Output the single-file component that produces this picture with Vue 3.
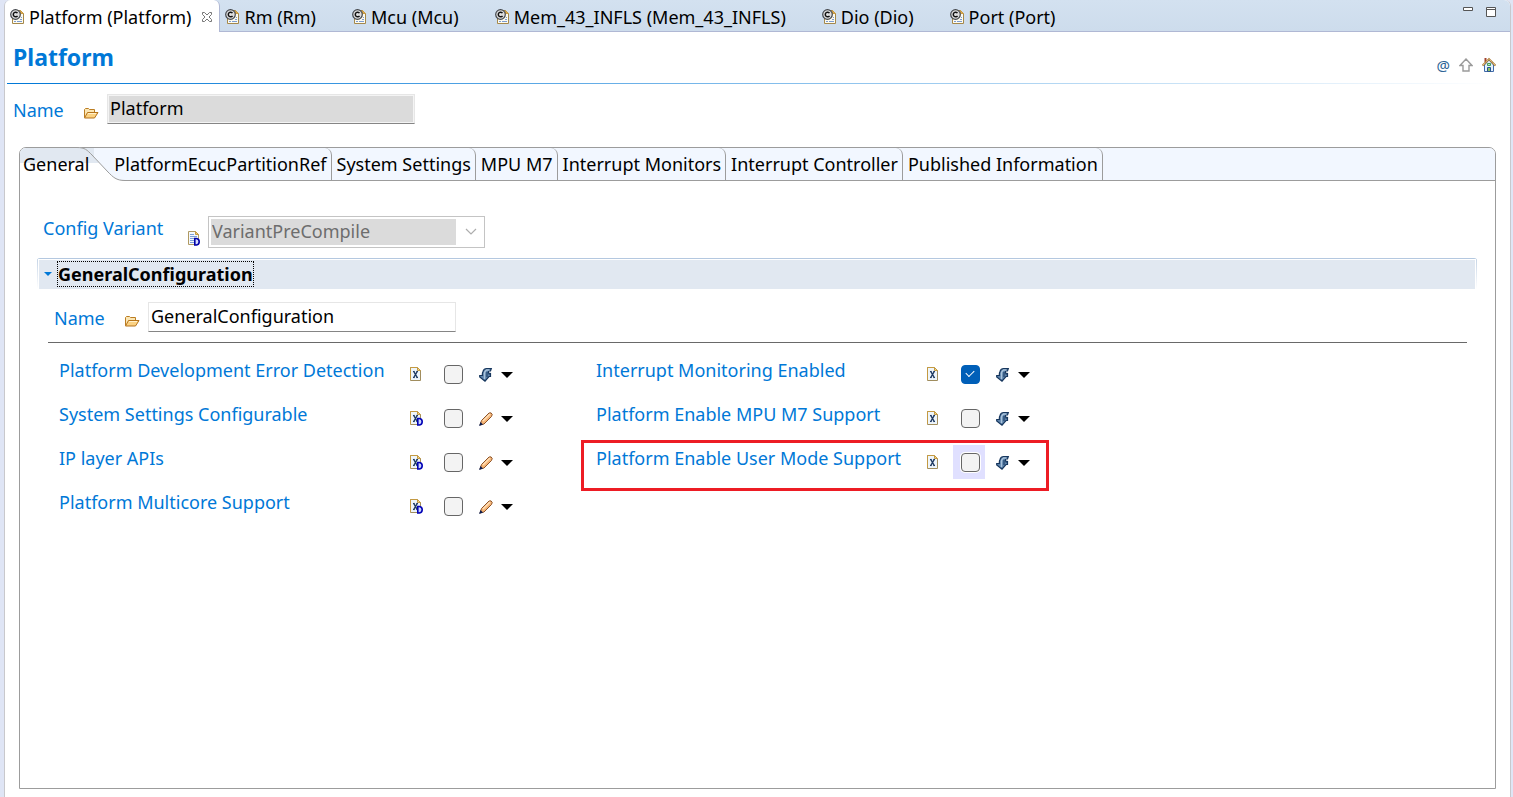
<template>
  <div class="editor">
    <svg class="defs" width="0" height="0" aria-hidden="true">
      <symbol id="i-module" viewBox="0 0 14 15">
        <path d="M4.500 1.500H10.500L13.500 4.500V14.500H2.500V8" fill="#fdfbf0" stroke="#a5884a" />
        <path d="M10.500 1.500L13.500 4.500H10.500Z" fill="#e8b04a" stroke="#c79a45" />
        <path d="M7 12.500H12M4 12.500H6M10 10.500H12M11 8.500H12" stroke="#7b9bd0" />
        <circle cx="5.500" cy="5.500" r="4.800" fill="#dedede" stroke="#44474c" stroke-width="1.200" />
        <path d="M7.500 4.200A2.300 2.300 0 1 0 7.500 6.800" fill="none" stroke="#111" stroke-width="1.500" />
      </symbol>
      <symbol id="i-folder" viewBox="0 0 16 12">
        <path d="M1.500 10.500V2.500L2.500 1.500H5.500L6.500 2.500H11.500V5" fill="#fbe6b4" stroke="#bb7d22" />
        <path d="M1.500 11L4.500 5.500H15L11.500 11Z" fill="#fbd283" stroke="#b5731a" />
        <path d="M5 6.500H13" stroke="#fff0cc" />
      </symbol>
      <symbol id="i-doc" viewBox="0 0 14 15">
        <path d="M0.500 0.500H7.500L10.500 3.500V13.500H0.500Z" fill="#f4f8fd" stroke="#b09a62" />
        <path d="M7.500 0.500L10.500 3.500H7.500Z" fill="#f0cf7c" stroke="#c49a42" />
        <path d="M2 3.500H6M2 5.500H9M2 7.500H9M2 9.500H6M2 11.500H6" stroke="#7d9fd6" />
        <path d="M6.800 7.500V14H8.500Q11.200 13.500 11.200 10.700Q11.200 8 8.500 7.500Z" fill="#d5dcff" stroke="#0000a8" stroke-width="1.600" />
      </symbol>
      <symbol id="i-x" viewBox="0 0 14 15">
        <path d="M0.500 0.500H7.500L10.500 3.500V13.500H0.500Z" fill="#eef5fb" stroke="#a08d5e" />
        <path d="M0.500 13V0.500H7" fill="none" stroke="#c49a42" />
        <path d="M7.500 0.500L10.500 3.500H7.500Z" fill="#f4d68c" stroke="#c49a42" />
        <path d="M3.500 4L7.500 11M7.500 4L3.500 11" stroke="#1f3a63" stroke-width="1.500" />
        <path d="M3 4.500H4.500M6.500 4.500H8M3 10.500H4.500M6.500 10.500H8" stroke="#1f3a63" />
      </symbol>
      <symbol id="i-xd" viewBox="0 0 14 15">
        <use href="#i-x" width="14" height="15" />
        <path d="M7.800 7.500V14H9.500Q12.200 13.500 12.200 10.700Q12.200 8 9.500 7.500Z" fill="#c9d4ff" stroke="#0000b4" stroke-width="1.600" />
      </symbol>
      <symbol id="i-calc" viewBox="0 0 14 14">
        <path d="M4 3.500Q5 0.700 7.500 0.700H12.300L11.500 3H9.500V5L11.500 5.500V8.500H10L6 13.200L0.700 9V7.500H3.500Q3 5.500 4 3.500Z" fill="#5d83ab" stroke="#17375e" stroke-width="1.200" />
        <path d="M5.500 11V7Q5 3.500 7.500 2H10.500" fill="none" stroke="#aac4dc" stroke-width="1.400" />
        <path d="M8 4V9M9.500 6H11.500" fill="none" stroke="#17375e" />
      </symbol>
      <symbol id="i-pencil" viewBox="0 0 14 14">
        <path d="M1 13L2.500 8.500L10 1Q12.500 0 13.200 2.500L12.500 4.500L5 12Z" fill="#f6b678" stroke="#8d542a" />
        <path d="M4 9L11 2" stroke="#ffe0b8" stroke-width="1.500" />
        <path d="M0 14L1.500 10L4 12.500Z" fill="#0c1d4f" />
      </symbol>
      <symbol id="i-up" viewBox="0 0 14 14">
        <path d="M7 1L13 7.500H10V13H4V7.500H1Z" fill="#fdfdfd" stroke="#9a9a9a" stroke-width="1.400" />
      </symbol>
      <symbol id="i-home" viewBox="0 0 14 16">
        <path d="M2.500 8L7 3L11.500 8V14.500H2.500Z" fill="#e4f1fc" stroke="#3f69a8" />
        <path d="M3.500 1V5" stroke="#a0432f" stroke-width="2" />
        <path d="M0.500 8.500L7 2L13.500 8.500" fill="none" stroke="#ad7c38" stroke-width="1.800" />
        <path d="M1 8L7 2L13 8" fill="none" stroke="#f5dc9c" stroke-width="1" stroke-dasharray="1 1" />
        <path d="M5.500 6.500H8.500V8.500H5.500Z" fill="#bfe6c4" stroke="#3f9b58" />
        <path d="M5.500 10.500H8.500V14.500H5.500Z" fill="#8fc05a" stroke="#285391" />
      </symbol>
    </svg>

    <header class="files">
      <nav class="file-tabs">
        <button v-for="(file, i) in files" :key="file" class="file-tab" :class="{ active: i === activeFile }" @click="activeFile = i">
          <svg width="14" height="15"><use href="#i-module" /></svg>
          <span>{{ file }}</span>
          <svg v-if="i === activeFile" class="close" width="12" height="12" viewBox="0 0 12 12">
            <path d="M1.500 1.500H3.500L6 4L8.500 1.500H10.500V3.500L8 6L10.500 8.500V10.500H8.500L6 8L3.500 10.500H1.500V8.500L4 6L1.500 3.500Z" fill="#fff" stroke="#777" />
          </svg>
        </button>
      </nav>
      <div class="window-buttons">
        <button aria-label="Minimize">
          <svg width="10" height="10" viewBox="0 0 10 10"><path d="M0.500 0.500H9.500V3.500H0.500Z" fill="#fff" stroke="#555" /></svg>
        </button>
        <button aria-label="Maximize">
          <svg width="10" height="10" viewBox="0 0 10 10"><path d="M0.500 0.500H9.500V9.500H0.500ZM0 2.500H10" fill="#fff" stroke="#555" /></svg>
        </button>
      </div>
    </header>

    <main class="content">
      <div class="title">
        <h1>Platform</h1>
        <div class="tools">
          <button class="at" aria-label="Annotate">@</button>
          <button aria-label="Up"><svg width="14" height="14"><use href="#i-up" /></svg></button>
          <button aria-label="Home"><svg width="14" height="16"><use href="#i-home" /></svg></button>
        </div>
      </div>
      <div class="title-line"></div>

      <div class="name-row">
        <label for="module-name">Name</label>
        <svg width="16" height="12"><use href="#i-folder" /></svg>
        <input id="module-name" type="text" value="Platform" disabled />
      </div>

      <section class="folder">
        <div class="pages">
          <button v-for="(page, i) in pages" :key="page" class="page" :class="{ active: i === activePage }" @click="activePage = i">
            <svg v-if="i === activePage" class="curve" width="48" height="34" viewBox="0 0 48 34">
              <path d="M0 0.500C8 0.500 10 3 15 8L31 25C36 30 39 33.500 48 33.500V34H0Z" fill="#fff" />
              <path d="M0 0.500C8 0.500 10 3 15 8L22 16H0Z" fill="#e1e8f1" />
              <path d="M0 0.500C8 0.500 10 3 15 8L31 25C36 30 39 33.500 48 33.500" fill="none" stroke="#9c9c9c" />
            </svg>
            <span>{{ page }}</span>
          </button>
        </div>

        <div class="panel">
          <div class="variant">
            <label for="variant">Config Variant</label>
            <svg width="14" height="15"><use href="#i-doc" /></svg>
            <div class="combo">
              <select id="variant" disabled>
                <option>VariantPreCompile</option>
              </select>
              <svg width="12" height="8" viewBox="0 0 12 8"><path d="M1 1L6 6L11 1" fill="none" stroke="#adadad" stroke-width="1.200" /></svg>
            </div>
          </div>

          <div class="group">
            <button class="group-head" @click="open = !open">
              <svg width="8" height="4" viewBox="0 0 8 4"><path d="M0 0H8L4 4Z" fill="#0078d7" /></svg>
              <span>GeneralConfiguration</span>
            </button>
          </div>

          <div v-if="open" class="group-body">
            <div class="name-row inner">
              <label for="group-name">Name</label>
              <svg width="16" height="12"><use href="#i-folder" /></svg>
              <input id="group-name" type="text" v-model="groupName" />
            </div>
            <div class="options">
              <div v-for="(column, c) in columns" :key="c" class="column">
                <div v-for="opt in column" :key="opt.id" class="option" :class="{ marked: opt.marked }">
                  <label :for="opt.id">{{ opt.label }}</label>
                  <svg width="14" height="15"><use :href="opt.byDefault ? '#i-xd' : '#i-x'" /></svg>
                  <span class="check" :class="{ focused: opt.marked }">
                    <input :id="opt.id" type="checkbox" v-model="opt.value" />
                  </span>
                  <button class="source" :aria-label="opt.label + ' source'">
                    <svg width="14" height="14"><use :href="opt.byDefault ? '#i-pencil' : '#i-calc'" /></svg>
                    <svg width="12" height="6" viewBox="0 0 12 6"><path d="M0 0H12L6 6Z" fill="#000" /></svg>
                  </button>
                </div>
              </div>
            </div>
          </div>
        </div>
      </section>
    </main>
  </div>
</template>

<script setup>
import { ref, reactive } from 'vue';

const files = [
  'Platform (Platform)',
  'Rm (Rm)',
  'Mcu (Mcu)',
  'Mem_43_INFLS (Mem_43_INFLS)',
  'Dio (Dio)',
  'Port (Port)'
];
const activeFile = ref(0);

const pages = [
  'General',
  'PlatformEcucPartitionRef',
  'System Settings',
  'MPU M7',
  'Interrupt Monitors',
  'Interrupt Controller',
  'Published Information'
];
const activePage = ref(0);

const open = ref(true);
const groupName = ref('GeneralConfiguration');

const columns = reactive([
  [
    { id: 'dev-error', label: 'Platform Development Error Detection', value: false },
    { id: 'system-settings', label: 'System Settings Configurable', value: false, byDefault: true },
    { id: 'ip-apis', label: 'IP layer APIs', value: false, byDefault: true },
    { id: 'multicore', label: 'Platform Multicore Support', value: false, byDefault: true }
  ],
  [
    { id: 'int-monitoring', label: 'Interrupt Monitoring Enabled', value: true },
    { id: 'mpu-m7', label: 'Platform Enable MPU M7 Support', value: false },
    { id: 'user-mode', label: 'Platform Enable User Mode Support', value: false, marked: true }
  ]
]);
</script>

<style>
body {
  background: #dfe5f5;
}
</style>

<style scoped>
* {
  box-sizing: border-box;
}

.editor {
  display: flex;
  flex-direction: column;
  min-height: 100vh;
  margin: 0 2px 0 4px;
  border: 1px solid #c8c8cc;
  border-width: 0 1px;
  border-radius: 6px 6px 0 0;
  background: #fff;
  font-family: "Noto Sans", "Open Sans", sans-serif;
  font-size: 18px;
  line-height: 24px;
  color: #000;
}

.defs {
  position: absolute;
}

svg {
  display: block;
  flex: none;
}

button {
  padding: 0;
  border: 0;
  background: none;
  font: inherit;
  color: inherit;
}

label {
  color: #0078d7;
  white-space: nowrap;
}

/* file tabs */
.files {
  display: flex;
  justify-content: space-between;
  height: 32px;
  border-bottom: 1px solid #b0b8d4;
  border-radius: 6px 6px 0 0;
  background: linear-gradient(#d3e1f0, #cddcec);
}

.file-tabs {
  display: flex;
}

.file-tab {
  display: flex;
  align-items: center;
  gap: 5px;
  height: 32px;
  padding: 1px 31px 0 5px;
  white-space: nowrap;
}

.file-tab.active {
  padding-right: 6px;
  border-right: 1px solid #b0b8d4;
  border-radius: 6px 6px 0 0;
  background: #fff;
}

.close {
  margin-left: 5px;
}

.window-buttons {
  display: flex;
  gap: 13px;
  padding: 7px 14px 0 0;
  align-items: flex-start;
}

/* title */
.content {
  display: flex;
  flex-direction: column;
  flex: 1;
  padding: 0 14px 8px;
}

.title {
  display: flex;
  justify-content: space-between;
  height: 51px;
  margin: 0 0 0 -6px;
}

h1 {
  margin: 9px 0 0;
  font-size: 23px;
  line-height: 32px;
  color: #0078d7;
}

.tools {
  display: flex;
  align-items: center;
  gap: 9px;
  padding: 15px 0 0;
}

.at {
  font-size: 15px;
  line-height: 16px;
  color: #2d6496;
}

.title-line {
  height: 1px;
  margin: 0 0 0 -12px;
  background: linear-gradient(90deg, #0078d7, #fff);
}

/* name fields */
.name-row {
  display: flex;
  align-items: center;
  margin: 10px 0 23px -6px;
}

.name-row svg {
  margin: 8px 8px 0 0;
}

.name-row label {
  width: 70px;
  margin-top: 2px;
}

.name-row input {
  width: 308px;
  height: 30px;
  padding: 0 2px 2px;
  border: 1px solid #e6e6e6;
  border-bottom-color: #858585;
  background: #fff;
  font: inherit;
  color: #000;
}

.name-row input:disabled {
  background: #dbdbdb;
  box-shadow: inset 0 0 0 1px #f4f4f4;
}

/* page tabs */
.folder {
  display: flex;
  flex-direction: column;
  flex: 1;
  border: 1px solid #9c9c9c;
  border-radius: 7px 7px 0 0;
}

.pages {
  display: flex;
  height: 33px;
  border-bottom: 1px solid #9c9c9c;
  border-radius: 6px 6px 0 0;
  background: #f2f7ff;
}

.page {
  height: 32px;
  padding: 0 4px 0 5px;
  border-right: 1px solid #9c9c9c;
  border-top-right-radius: 7px;
  white-space: nowrap;
}

.page.active {
  position: relative;
  height: 33px;
  margin-right: 15px;
  padding: 0 5px 1px 3px;
  border: 0;
  border-radius: 6px 0 0 0;
  background: linear-gradient(#e1e8f1 15px, #fff 15px);
}

.page.active span {
  position: relative;
}

.curve {
  position: absolute;
  top: -1px;
  left: 57px;
}

/* general page */
.panel {
  flex: 1;
  padding: 35px 18px 0 17px;
}

.variant {
  display: flex;
  align-items: center;
  height: 32px;
}

.variant label {
  width: 145px;
  margin: 0 0 8px 6px;
}

.variant > svg {
  margin: 13px 6px 0 0;
}

.combo {
  position: relative;
}

.combo select {
  display: block;
  appearance: none;
  width: 277px;
  height: 32px;
  padding: 0 30px 2px 3px;
  border: 1px solid #c4c4c4;
  background: linear-gradient(#dbdbdb, #dbdbdb) 2px 2px / 245px 26px no-repeat #fff;
  font: inherit;
  color: #6d6d6d;
  opacity: 1;
}

.combo svg {
  position: absolute;
  top: 12px;
  right: 8px;
}

.group {
  margin-top: 10px;
  padding: 0 1px;
  border-top: 1px solid #b4c8e0;
  border-radius: 3px 3px 0 0;
  background: linear-gradient(#c5d4e6, #fff);
}

.group-head {
  display: flex;
  align-items: center;
  gap: 6px;
  width: 100%;
  height: 30px;
  padding: 0 0 2px 5px;
  border: 1px solid #fff;
  border-bottom: 0;
  background: #e1e8f1;
  font-weight: bold;
}

.group-head span {
  outline: 1px dotted #000;
}

.group-body {
  padding: 0 10px 0 11px;
}

.name-row.inner {
  margin: 0;
  padding: 13px 0 10px 6px;
}

.options {
  display: flex;
  gap: 83px;
  padding: 9px 0 0 11px;
  border-top: 1px solid #696969;
}

.option {
  position: relative;
  display: flex;
  align-items: center;
  height: 44px;
}

.option label {
  width: 351px;
  margin-bottom: 8px;
}

.column + .column .option label {
  width: 331px;
}

.check {
  display: flex;
  align-items: center;
  justify-content: center;
  width: 32px;
  height: 34px;
  margin: 0 11px 0 12px;
  padding-left: 2px;
}

.check.focused {
  background: #e0e0ff;
}

.check input {
  appearance: none;
  width: 19px;
  height: 19px;
  margin: 0;
  border: 1px solid #666;
  border-radius: 4px;
  background: #f3f3f3;
}

.check.focused input {
  box-shadow: 0 0 0 1px #fff;
}

.check input:checked {
  border-color: #005fb8;
  background: #005fb8;
  display: grid;
  place-items: center;
}

.check input:checked::after {
  content: "";
  width: 7px;
  height: 4px;
  margin-bottom: 3px;
  border: solid #fff;
  border-width: 0 0 1px 1px;
  transform: rotate(-45deg);
}

.source {
  display: flex;
  align-items: center;
  gap: 8px;
  padding-top: 2px;
}

/* call-out around the user mode option */
.option.marked::before {
  content: "";
  position: absolute;
  inset: 0 -19px -7px -15px;
  border: 3px solid #ed1c24;
  pointer-events: none;
}
</style>
